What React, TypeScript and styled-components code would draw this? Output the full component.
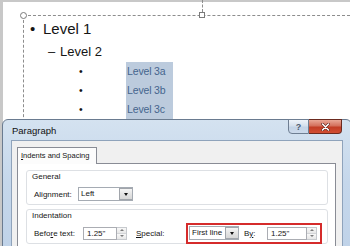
import React from 'react';
import styled, { createGlobalStyle } from 'styled-components';

const GlobalStyle = createGlobalStyle`
  html, body {
    margin: 0;
    padding: 0;
    background: #fff;
  }
  body {
    width: 350px;
    height: 246px;
    overflow: hidden;
    font-family: "Liberation Sans", Arial, sans-serif;
  }
`;

const Screen = styled.div`
  position: relative;
  box-sizing: border-box;
  width: 350px;
  height: 246px;
  overflow: hidden;
  background: #fff;
  box-shadow: inset 3px 2px 0 #c8c8c8;
  padding: 15px 0 0 23px;
  display: flex;
`;

const Placeholder = styled.div`
  flex: 1;
  border-top: 1px dashed #8d8d8d;
  border-left: 1px dashed #8d8d8d;
  display: flex;
  flex-direction: column;
  color: #151515;
`;

const Line = styled.div<{ $h: number; $indent: number; $size: number }>`
  display: flex;
  align-items: center;
  flex: none;
  height: ${(p) => p.$h}px;
  line-height: ${(p) => p.$h}px;
  padding-left: ${(p) => p.$indent}px;
  font-size: ${(p) => p.$size}px;
  white-space: nowrap;
`;

const Marker = styled.span<{ $w: number }>`
  flex: none;
  width: ${(p) => p.$w}px;
`;

const Selected = styled.span`
  box-sizing: border-box;
  width: 47px;
  height: 100%;
  padding-left: 1px;
  background: #bccbdd;
  color: #45658d;
  letter-spacing: -0.15px;
`;

const CornerHandle = styled.div`
  position: absolute;
  left: 20px;
  top: 12px;
  width: 7px;
  height: 7px;
  box-sizing: border-box;
  border: 1px solid #7a7a7a;
  border-radius: 50%;
  background: #fff;
`;

const EdgeHandle = styled.div`
  position: absolute;
  left: 199px;
  top: 12px;
  width: 6px;
  height: 6px;
  box-sizing: border-box;
  border: 1px solid #7a7a7a;
  background: #fff;
`;

const RotateStem = styled.div`
  position: absolute;
  left: 202px;
  top: 0;
  height: 12px;
  border-left: 1px dashed #8d8d8d;
`;

/* dialog window */
const Dialog = styled.div`
  position: absolute;
  left: 2px;
  top: 119px;
  width: 350px;
  height: 140px;
  box-sizing: border-box;
  border: 1px solid #6a7b90;
  border-radius: 6px 6px 0 0;
  background: linear-gradient(#d4e2f0, #c5d7eb 45%, #bfd2e8);
  display: flex;
  flex-direction: column;
  color: #161616;
`;

const TitleBar = styled.div`
  flex: none;
  height: 20px;
  line-height: 21px;
  padding-left: 9px;
  font-size: 9.5px;
  color: #111;
`;

const CaptionButtons = styled.div`
  position: absolute;
  top: -1px;
  left: 285px;
  display: flex;
`;

const CaptionButton = styled.div<{ $close?: boolean }>`
  box-sizing: border-box;
  width: ${(p) => (p.$close ? 33 : 21)}px;
  height: 15px;
  display: flex;
  align-items: center;
  justify-content: center;
  border: 1px solid ${(p) => (p.$close ? '#6b2a1f' : '#6e7e92')};
  border-left: ${(p) => (p.$close ? 'none' : '1px solid #6e7e92')};
  border-radius: ${(p) => (p.$close ? '0 0 4px 0' : '0 0 0 4px')};
  background: ${(p) =>
    p.$close
      ? 'linear-gradient(#e9a796, #d4705c 45%, #c23d25 55%, #d24e33)'
      : 'linear-gradient(#eef3f9, #d5e0ed 45%, #c3d3e6 55%, #ccdaeb)'};
  color: #4d5b6f;
  font-size: 9px;
  font-weight: bold;
`;

const Client = styled.div`
  flex: 1;
  margin: 0 8px;
  border: 1px solid #8fa3bb;
  border-bottom: none;
  background: #f0f0f0;
  padding: 6px 6px 0 5px;
  display: flex;
  flex-direction: column;
`;

const TabStrip = styled.div`
  flex: none;
  display: flex;
  height: 16px;
  position: relative;
  z-index: 1;
`;

const Tab = styled.div`
  box-sizing: border-box;
  width: 80px;
  height: 17px;
  border: 1px solid #898c95;
  border-bottom: none;
  background: #fcfcfc;
  padding-left: 3px;
  font-size: 7.5px;
  line-height: 16px;
  white-space: nowrap;
`;

const Pane = styled.div`
  flex: 1;
  border: 1px solid #898c95;
  border-bottom: none;
  background: #fff;
  padding: 6px 7px 0 8px;
  display: flex;
  flex-direction: column;
  gap: 4px;
`;

const Group = styled.div`
  flex: none;
  border: 1px solid #dde0e4;
  border-radius: 3px;
  padding: 0 5px 3px 5px;
  display: flex;
  flex-direction: column;
  gap: 4px;
`;

const GroupTitle = styled.div`
  height: 12px;
  line-height: 12px;
  font-size: 8px;
`;

const FieldRow = styled.div`
  display: flex;
  align-items: center;
  height: 14px;
  padding-left: 2px;
  font-size: 8px;
  white-space: nowrap;
`;

const Label = styled.span<{ $w: number; $gap?: number }>`
  flex: none;
  width: ${(p) => p.$w}px;
  margin-left: ${(p) => p.$gap ?? 0}px;
`;

const Key = styled.span`
  text-decoration: underline;
`;

const Combo = styled.div<{ $w: number }>`
  box-sizing: border-box;
  width: ${(p) => p.$w}px;
  height: 14px;
  border: 1px solid #a5abb3;
  background: #fff;
  display: flex;
  align-items: center;
  padding-left: 2px;
`;

const ComboText = styled.span`
  flex: 1;
  line-height: 12px;
`;

const DropButton = styled.span`
  box-sizing: border-box;
  width: 13px;
  height: 12px;
  border: 1px solid #a1a5ab;
  border-right: none;
  background: linear-gradient(#f5f5f5, #e4e4e4 50%, #d7d7d7);
  display: flex;
  align-items: center;
  justify-content: center;
`;

const DownTriangle = styled.span`
  width: 0;
  height: 0;
  border-left: 2.5px solid transparent;
  border-right: 2.5px solid transparent;
  border-top: 3px solid #111;
`;

const Spin = styled.div<{ $w: number }>`
  display: flex;
  height: 13px;
  width: ${(p) => p.$w}px;
`;

const SpinText = styled.span`
  flex: 1;
  box-sizing: border-box;
  border: 1px solid #abadb3;
  background: #fff;
  padding-left: 3px;
  line-height: 11px;
`;

const SpinButtons = styled.span`
  flex: none;
  width: 10px;
  display: flex;
  flex-direction: column;
  box-sizing: border-box;
  border: 1px solid #c7cace;
  border-left: none;
`;

const SpinHalf = styled.span<{ $up?: boolean }>`
  flex: 1;
  display: flex;
  align-items: center;
  justify-content: center;
  background: linear-gradient(#f8f8f8, #e7e7e7);
  border-bottom: ${(p) => (p.$up ? '1px solid #d3d5d8' : 'none')};
`;

const SpinArrow = styled.span<{ $up?: boolean }>`
  width: 0;
  height: 0;
  border-left: 2px solid transparent;
  border-right: 2px solid transparent;
  ${(p) => (p.$up ? 'border-bottom: 2px solid #7b7b7b;' : 'border-top: 2px solid #7b7b7b;')}
`;

const Callout = styled.div`
  box-sizing: border-box;
  height: 21px;
  border: 2px solid #d52b2b;
  padding: 0 3px 0 1px;
  display: flex;
  align-items: center;
  gap: 5px;
`;

const Spinner = ({ value, width }: { value: string; width: number }) => (
  <Spin $w={width}>
    <SpinText>{value}</SpinText>
    <SpinButtons>
      <SpinHalf $up>
        <SpinArrow $up />
      </SpinHalf>
      <SpinHalf>
        <SpinArrow />
      </SpinHalf>
    </SpinButtons>
  </Spin>
);

const Dropdown = ({ value, width }: { value: string; width: number }) => (
  <Combo $w={width}>
    <ComboText>{value}</ComboText>
    <DropButton>
      <DownTriangle />
    </DropButton>
  </Combo>
);

export default function App() {
  return (
    <>
      <GlobalStyle />
      <Screen>
        <RotateStem />
        <Placeholder>
          <Line $h={26} $indent={6} $size={15}>
            <Marker $w={13}>•</Marker>
            Level 1
          </Line>
          <Line $h={20} $indent={24} $size={13}>
            <Marker $w={12}>–</Marker>
            Level 2
          </Line>
          {['Level 3a', 'Level 3b', 'Level 3c'].map((t) => (
            <Line key={t} $h={19} $indent={55} $size={10.5}>
              <Marker $w={47}>•</Marker>
              <Selected>{t}</Selected>
            </Line>
          ))}
        </Placeholder>
        <CornerHandle />
        <EdgeHandle />

        <Dialog>
          <TitleBar>Paragraph</TitleBar>
          <CaptionButtons>
            <CaptionButton>?</CaptionButton>
            <CaptionButton $close>
              <svg width="9" height="8" viewBox="0 0 9 8">
                <path d="M1.5 1 L7.5 7 M7.5 1 L1.5 7" stroke="#5a1a10" strokeWidth="2.6" strokeLinecap="round" />
                <path d="M1.5 1 L7.5 7 M7.5 1 L1.5 7" stroke="#fff" strokeWidth="1.6" strokeLinecap="round" />
              </svg>
            </CaptionButton>
          </CaptionButtons>
          <Client>
            <TabStrip>
              <Tab>
                <Key>I</Key>ndents and Spacing
              </Tab>
            </TabStrip>
            <Pane>
              <Group>
                <GroupTitle>General</GroupTitle>
                <FieldRow>
                  <Label $w={44}>Alignment:</Label>
                  <Dropdown value="Left" width={55} />
                </FieldRow>
              </Group>
              <Group>
                <GroupTitle>Indentation</GroupTitle>
                <FieldRow>
                  <Label $w={49}>
                    Befo<Key>r</Key>e text:
                  </Label>
                  <Spinner value={'1.25"'} width={50} />
                  <Label $w={50} $gap={9}>
                    <Key>S</Key>pecial:
                  </Label>
                  <Callout>
                    <Dropdown value="First line" width={50} />
                    <Label $w={18}>
                      B<Key>y</Key>:
                    </Label>
                    <Spinner value={'1.25"'} width={50} />
                  </Callout>
                </FieldRow>
              </Group>
            </Pane>
          </Client>
        </Dialog>
      </Screen>
    </>
  );
}
